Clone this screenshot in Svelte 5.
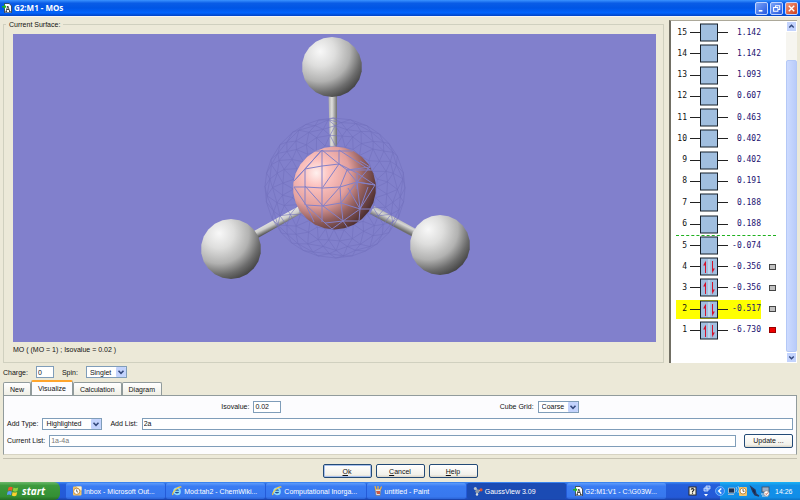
<script lang="ts">
	type Orbital = { id: number; energy: string; occupied?: boolean; mark?: 'grey' | 'red' };

	const orbitals: Orbital[] = [
		{ id: 15, energy: '1.142' },
		{ id: 14, energy: '1.142' },
		{ id: 13, energy: '1.093' },
		{ id: 12, energy: '0.607' },
		{ id: 11, energy: '0.463' },
		{ id: 10, energy: '0.402' },
		{ id: 9, energy: '0.402' },
		{ id: 8, energy: '0.191' },
		{ id: 7, energy: '0.188' },
		{ id: 6, energy: '0.188' },
		{ id: 5, energy: '-0.074' },
		{ id: 4, energy: '-0.356', occupied: true, mark: 'grey' },
		{ id: 3, energy: '-0.356', occupied: true, mark: 'grey' },
		{ id: 2, energy: '-0.517', occupied: true, mark: 'grey' },
		{ id: 1, energy: '-6.730', occupied: true, mark: 'red' }
	];

	const tabs = ['New', 'Visualize', 'Calculation', 'Diagram'];

	const tasks = [
		{ icon: 'mail', label: 'Inbox - Microsoft Out...' },
		{ icon: 'ie', label: 'Mod:tah2 - ChemWiki...' },
		{ icon: 'ie', label: 'Computational Inorga...' },
		{ icon: 'paint', label: 'untitled - Paint' },
		{ icon: 'gauss', label: 'GaussView 3.09' },
		{ icon: 'doc', label: 'G2:M1:V1 - C:\\G03W...' }
	];

	let selected = $state(2);
	let activeTab = $state('Visualize');
	let activeTask = $state('GaussView 3.09');
	let charge = $state('0');
	let spin = $state('Singlet');
	let isovalue = $state('0.02');
	let cubeGrid = $state('Coarse');
	let addType = $state('Highlighted');
	let addList = $state('2a');

	// the spheres are drawn with few facets, so their outline is a polygon
	function facets(cx: number, cy: number, r: number, n: number) {
		const points = [];
		for (let i = 0; i < n; i++) {
			const a = ((i + 0.5) / n) * Math.PI * 2;
			points.push(`${(cx + r * Math.cos(a)).toFixed(1)},${(cy + r * Math.sin(a)).toFixed(1)}`);
		}
		return points.join(' ');
	}

	// rings of a sphere seen from the front, joined into triangles
	function shellMesh(cx: number, cy: number) {
		const radii = [70, 67, 61, 53, 42];
		const n = 28;
		const at = (ring: number, i: number) => {
			const k = i % n;
			const wobble = ring === 0 ? 0 : Math.sin(k * 2.7 + ring * 4) * 1.5;
			const a = ((i + (ring % 2) / 2 + Math.sin(k * 5 + ring) * 0.12) / n) * Math.PI * 2;
			const r = radii[ring] + wobble;
			return `${(cx + r * Math.cos(a)).toFixed(1)} ${(cy + r * Math.sin(a)).toFixed(1)}`;
		};
		let d = '';
		for (let ring = 0; ring < radii.length; ring++) {
			for (let i = 0; i < n; i++) {
				d += `M${at(ring, i)}L${at(ring, i + 1)}`;
				if (ring + 1 < radii.length) {
					d += `M${at(ring, i)}L${at(ring + 1, i)}`;
					d += ring % 2 ? `M${at(ring, i)}L${at(ring + 1, i + 1)}` : `M${at(ring, i + 1)}L${at(ring + 1, i)}`;
				}
			}
		}
		return d;
	}

	const hydrogens = [
		[332, 67],
		[231, 249],
		[440, 245]
	];
	const shell = shellMesh(335, 188);
</script>

{#snippet chevron()}
	<svg class="chevron" viewBox="0 0 10 10" aria-hidden="true">
		<rect width="10" height="10" rx="1" fill="#c3d3fd" />
		<path d="M2.5 3.8 5 6.3 7.5 3.8" fill="none" stroke="#34497d" stroke-width="1.6" />
	</svg>
{/snippet}

{#snippet taskIcon(name: string)}
	<svg class="task-icon" viewBox="0 0 10 10" aria-hidden="true">
		{#if name === 'mail'}
			<rect x="1" y="0.5" width="8.5" height="9" rx="1" fill="#f3c566" />
			<path d="M4 0.5h5.5v4z" fill="#fff5d2" />
			<circle cx="4.7" cy="5.3" r="3.1" fill="#fff" stroke="#b67a2a" stroke-width="0.8" />
			<path d="M4.7 3.5v2l1.3.7" fill="none" stroke="#4a3c28" stroke-width="0.8" />
		{:else if name === 'ie'}
			<circle cx="5" cy="5.4" r="3" fill="#1d4f9c" stroke="#8bd8ff" stroke-width="1.7" />
			<path d="M2.5 5.3h5.3" stroke="#8bd8ff" stroke-width="1.3" />
			<path d="M1 9C-.6 7 6.5-.5 9.4 1.2" fill="none" stroke="#ffd23c" stroke-width="1.1" />
		{:else if name === 'paint'}
			<path d="M2 3h6l-.8 6.5H3z" fill="#d8dfe8" stroke="#6b6a78" stroke-width="0.6" />
			<path d="M3 4 2 0M5 4V0M7 4l1.5-3.5" stroke="#f2b33c" stroke-width="1.2" />
			<path d="M3 5h4v3H4z" fill="#cf5a42" />
		{:else if name === 'gauss'}
			<path d="M2 2l2.5 3L8 4M4.5 5 4 8.5" fill="none" stroke="#dbe2ec" stroke-width="1" />
			<circle cx="2.3" cy="2.5" r="1.5" fill="#b9c4cf" />
			<circle cx="4.4" cy="5.3" r="2.1" fill="#8c97a4" />
			<circle cx="8" cy="3.8" r="1.6" fill="#e4572f" />
			<circle cx="4" cy="8.5" r="1.2" fill="#d7dde3" />
		{:else}
			<path d="M2.5.5h4.7L9.5 3v6.8h-7z" fill="#fff" stroke="#222" stroke-width="0.7" />
			<path d="M4 8.5 5.8 3l2 5.5M3.5 8.5h1.6M7 8.5h1.7M4.7 6.5h2.3" fill="none" stroke="#222" stroke-width="0.8" />
			<path d="M0 3h2V1l2.5 2.7L2 6.2V4.5H0z" fill="#22b322" />
		{/if}
	</svg>
{/snippet}

<div class="screen">
	<header class="titlebar">
		{@render taskIcon('doc')}
		<h1>G2:M1 - MOs</h1>
		<div class="window-buttons">
			<button aria-label="Minimize">
				<svg viewBox="0 0 12 12"><path d="M3 8.5h4" stroke="#fff" stroke-width="1.8" /></svg>
			</button>
			<button aria-label="Restore">
				<svg viewBox="0 0 12 12">
					<path d="M5 4.5V3h4.5v4H8M2.8 5h4.7v4H2.8z" fill="none" stroke="#fff" stroke-width="1.1" />
				</svg>
			</button>
			<button class="close" aria-label="Close">
				<svg viewBox="0 0 12 12"><path d="m3 3 6 6m0-6-6 6" stroke="#fff" stroke-width="1.5" /></svg>
			</button>
		</div>
	</header>

	<main>
		<div class="top">
			<fieldset>
				<legend>Current Surface:</legend>
				<svg class="surface" viewBox="13 34 643 308" role="img" aria-label="Molecular orbital surface">
					<defs>
						<radialGradient id="hydrogen" cx="0.3" cy="0.24" r="0.84">
							<stop offset="0" stop-color="#f8f8f8" />
							<stop offset="0.3" stop-color="#dededd" />
							<stop offset="0.6" stop-color="#b2b2b1" />
							<stop offset="0.82" stop-color="#6c6c6c" />
							<stop offset="1" stop-color="#404040" />
						</radialGradient>
						<radialGradient id="boron" cx="0.28" cy="0.32" r="0.8">
							<stop offset="0" stop-color="#fff0ee" />
							<stop offset="0.2" stop-color="#fcc2bf" />
							<stop offset="0.5" stop-color="#e29f9d" />
							<stop offset="0.72" stop-color="#94605f" />
							<stop offset="1" stop-color="#45292b" />
						</radialGradient>
						<linearGradient id="bond">
							<stop offset="0" stop-color="#aaa" />
							<stop offset="0.4" stop-color="#e0e0de" />
							<stop offset="1" stop-color="#6e6e6e" />
						</linearGradient>
						<linearGradient id="bond-left" gradientUnits="userSpaceOnUse" x1="276" y1="218" x2="280" y2="226">
							<stop offset="0" stop-color="#e6e6e4" />
							<stop offset="0.5" stop-color="#cdcdcb" />
							<stop offset="1" stop-color="#5c5c5c" />
						</linearGradient>
						<linearGradient id="bond-right" gradientUnits="userSpaceOnUse" x1="396" y1="217" x2="392" y2="225">
							<stop offset="0" stop-color="#b4b4b2" />
							<stop offset="0.4" stop-color="#d6d6d4" />
							<stop offset="1" stop-color="#6e6e6e" />
						</linearGradient>
					</defs>
					<path d="M328.5 94h8.5v58h-7z" fill="url(#bond)" />
					<path d="M254 231l45-25 3 7-44 25z" fill="url(#bond-left)" />
					<path d="M374 206l42 23-3 8-43-23z" fill="url(#bond-right)" />
					{#each hydrogens as [x, y]}
						<polygon points={facets(x, y, 30, 22)} fill="url(#hydrogen)" />
					{/each}
					<path d={shell} fill="none" stroke="#7270be" stroke-width="0.6" />
					<polygon points={facets(334.5, 188, 41.5, 26)} fill="url(#boron)" />
					<g fill="none" stroke="#8380c8">
						<path d="M312 151h41M294 181l11-12 17-19 17 14 8 6 23-3-10-6M305 169l17-3 17-2 0-14M322 150v72M305 169v36M294 187h11l18 1 17-1 17-5 18 3M305 186l18 20M323 187l16-23M322 150l-28 31" />
						<path d="M294 187l12 18 17 1 18-3 19 6M306 205l19 18 18-2 17-12 8-22M323 206l17-19M323 206l20 15 5 7M325 223l7 6M306 205l8 17M347 170l-7 17 1 16 16-21 3 27M347 170l10 12 13-15M339 164l18 9 18 12M357 182l18 3M360 209l-1 12-16 0-11 8M360 209h10M341 203l2 18M339 150l31 20M357 174v15M347 170h25M360 209l15-24M348 188l12 21" />
					</g>
				</svg>
				<p>MO ( (MO = 1) ; Isovalue = 0.02 )</p>
			</fieldset>

			<section class="orbitals" aria-label="Orbitals">
				<ol>
					{#each orbitals as orbital}
						<li class:fermi={orbital.id === 5}>
							<button class="level" class:selected={selected === orbital.id} onclick={() => (selected = orbital.id)}>
								<span class="number">{orbital.id}</span>
								<svg viewBox="0 0 38 19" aria-hidden="true">
									<path d="M0 9.5h38" stroke="#222" />
									<rect x="10.5" y="1" width="17" height="17" fill="#a1bfe0" stroke="#17202b" />
									{#if orbital.occupied}
										<path d="M19 2v15" stroke="#dce9f8" />
										<path d="M15.5 16V5M22.5 4v10" fill="none" stroke="#d3122c" />
										<path d="m15.8 3.5-2.6 5h2.6zM22.2 16.5l2.6-5h-2.6z" fill="#d3122c" />
									{/if}
								</svg>
								<span class="energy">{orbital.energy}</span>
							</button>
							{#if orbital.mark}
								<span class="mark {orbital.mark}"></span>
							{/if}
						</li>
					{/each}
				</ol>
				<div class="scrollbar">
					<button aria-label="Scroll up">
						<svg viewBox="0 0 10 10"><path d="M2.5 6.2 5 3.7l2.5 2.5" fill="none" stroke="#34497d" stroke-width="1.6" /></svg>
					</button>
					<span class="thumb"></span>
					<button aria-label="Scroll down">
						<svg viewBox="0 0 10 10"><path d="M2.5 3.8 5 6.3l2.5-2.5" fill="none" stroke="#34497d" stroke-width="1.6" /></svg>
					</button>
				</div>
			</section>
		</div>

		<div class="row state">
			<label for="charge">Charge:</label>
			<input id="charge" class="tiny" bind:value={charge} />
			<label for="spin">Spin:</label>
			<span class="select">
				<select id="spin" bind:value={spin}>
					<option>Singlet</option>
					<option>Triplet</option>
				</select>
				{@render chevron()}
			</span>
		</div>

		<div class="tabs" role="tablist">
			{#each tabs as tab}
				<button role="tab" aria-selected={activeTab === tab} class:active={activeTab === tab} onclick={() => (activeTab = tab)}>
					{tab}
				</button>
			{/each}
		</div>

		<div class="panel" role="tabpanel">
			<div class="row spread">
				<div class="row">
					<label for="isovalue">Isovalue:</label>
					<input id="isovalue" class="small" bind:value={isovalue} />
				</div>
				<div class="row">
					<label for="grid">Cube Grid:</label>
					<span class="select">
						<select id="grid" bind:value={cubeGrid}>
							<option>Coarse</option>
							<option>Medium</option>
							<option>Fine</option>
						</select>
						{@render chevron()}
					</span>
				</div>
			</div>
			<div class="row">
				<label for="add-type">Add Type:</label>
				<span class="select wide">
					<select id="add-type" bind:value={addType}>
						<option>Highlighted</option>
						<option>All</option>
					</select>
					{@render chevron()}
				</span>
				<label class="spaced" for="add-list">Add List:</label>
				<input id="add-list" class="fill" bind:value={addList} />
			</div>
			<div class="row">
				<label for="current-list">Current List:</label>
				<input id="current-list" class="fill" value="1a-4a" disabled />
				<button class="push update">Update ...</button>
			</div>
		</div>

		<div class="actions">
			<button class="push default"><u>O</u>k</button>
			<button class="push"><u>C</u>ancel</button>
			<button class="push"><u>H</u>elp</button>
		</div>
	</main>

	<footer class="taskbar">
		<button class="start">
			<svg viewBox="0 0 12 12" aria-hidden="true">
				<path d="M1.5 2.5Q3.5 1 5.7 2.3L5 5.7Q3 4.6.8 5.8z" fill="#f05a28" />
				<path d="M6.5 2.6q2.3 1.2 4.7 0l-.8 3.5q-2.2 1.2-4.6 0z" fill="#8cd13f" />
				<path d="M.6 6.7q2-1.2 4.2-.1l-.8 3.6Q2 9-.2 10.2z" fill="#5a9cf5" />
				<path d="M5.6 7q2.3 1.2 4.6 0l-.8 3.6q-2.2 1.2-4.5 0z" fill="#fcd02e" />
			</svg>
			start
		</button>
		<nav aria-label="Open windows">
			{#each tasks as task}
				<button class:pressed={activeTask === task.label} onclick={() => (activeTask = task.label)}>
					{@render taskIcon(task.icon)}
					<span>{task.label}</span>
				</button>
			{/each}
		</nav>
		<svg class="language" viewBox="0 0 32 18" aria-hidden="true">
			<rect x="1" y="5" width="7" height="8" fill="#f4f1e2" stroke="#2b2b2b" />
			<path d="M3 7.5q1.5-1.8 3 0 0 1-1.5 2v.7m0 .6v1" fill="none" stroke="#222" stroke-width="1.1" />
			<path d="M18 4h4v3h-4zM16 6h4v3h-4z" fill="#5b92f5" stroke="#d8e6ff" stroke-width="0.8" />
			<path d="m16 12 2 2.4 2-2.4z" fill="#fff" />
		</svg>
		<div class="tray">
			<svg viewBox="0 0 52 18" aria-hidden="true">
				<circle cx="0" cy="9" r="4.5" fill="#2b7ff0" stroke="#8fc4ff" stroke-width="0.7" />
				<path d="m1.3 6.5-2.6 2.5 2.6 2.5" fill="none" stroke="#fff" stroke-width="1.4" />
				<path d="M8.5 6h6v5h-6zM8 12.5h6" fill="#1d3050" stroke="#aebfd0" stroke-width="0.9" />
				<path d="M16 5q2 2 0 5M18 4q2.5 3 0 7" fill="none" stroke="#a9d8ff" stroke-width="0.8" />
				<rect x="19" y="5" width="8" height="9" rx="1" fill="#f1c46b" />
				<circle cx="23" cy="9" r="3" fill="#fff" stroke="#b67a2a" stroke-width="0.8" />
				<path d="M23 7v2.3h1.5" fill="none" stroke="#49402f" stroke-width="0.8" />
				<path d="m31 5 4 3 1 4 3 2-4-1-2-3z" fill="#14254a" stroke="#273960" stroke-width="1.3" />
				<rect x="42" y="5" width="7" height="5" fill="#9eafc5" stroke="#3e4d63" stroke-width="0.8" />
				<path d="M41 12h7M42 14h6" stroke="#d9dee3" stroke-width="1.1" />
				<circle cx="46.5" cy="11.5" r="2.7" fill="#fff" stroke="#777" stroke-width="0.6" />
				<path d="m45.3 11.5 1 1 1.6-2" fill="none" stroke="#b5422a" stroke-width="0.9" />
			</svg>
			<time>14:26</time>
		</div>
	</footer>
</div>

<style>
	:global(body) {
		margin: 0;
	}

	.screen {
		display: flex;
		flex-direction: column;
		min-height: 100vh;
		background: #ece9d8;
		color: #111;
		font: 7px/9px 'Liberation Sans', Arial, sans-serif;
	}

	.screen * {
		box-sizing: border-box;
	}

	button,
	input,
	select {
		margin: 0;
		padding: 0;
		border: 0;
		border-radius: 0;
		background: none;
		color: inherit;
		font: inherit;
	}

	svg {
		display: block;
	}

	.titlebar {
		display: flex;
		align-items: center;
		gap: 2px;
		height: 17px;
		padding: 0 2px;
		background: linear-gradient(#3b93ff, #0a5ce6 20%, #0055e5 50%, #0264fd 80%, #0143c4);
		border-bottom: 1px solid #f5f5f5;
	}

	h1 {
		flex: 1;
		margin: 0;
		color: #fff;
		font: bold 8px/10px 'Noto Sans', sans-serif;
	}

	.window-buttons {
		display: flex;
		gap: 2px;
	}

	.window-buttons button {
		width: 13px;
		height: 13px;
		border: 1px solid #bfd3ff;
		border-radius: 2px;
		background: linear-gradient(135deg, #7ba4f8, #2458e0);
	}

	.window-buttons .close {
		background: linear-gradient(135deg, #f0977c, #d0401a);
	}

	main {
		display: flex;
		flex: 1;
		flex-direction: column;
	}

	.top {
		display: flex;
		flex: 1;
		gap: 5px;
		padding: 3px 3px 0;
	}

	fieldset {
		display: flex;
		flex: 1;
		flex-direction: column;
		min-width: 0;
		margin: 0;
		padding: 5px 7px 8px 9px;
		border: 1px solid #d0d0bf;
	}

	legend {
		margin-left: -7px;
		padding: 0 3px;
	}

	.surface {
		flex: 1 1 300px;
		width: 100%;
		min-height: 0;
		background: #8180cc;
	}

	fieldset p {
		margin: 3px 0 0;
	}

	.orbitals {
		display: flex;
		width: 128px;
		border-top: 1px solid #aca899;
		border-left: 2px solid #716f64;
		background: #fff;
	}

	ol {
		display: grid;
		flex: 1;
		grid-auto-rows: 1fr;
		margin: 0;
		padding: 1px 10px 22px 5px;
		list-style: none;
	}

	li {
		display: flex;
		align-items: center;
		justify-content: space-between;
	}

	.fermi {
		border-top: 1px dashed #1fb01f;
	}

	.level {
		display: flex;
		align-items: center;
		width: 85px;
		height: 19px;
		font: 8px/10px 'DejaVu Sans Mono', monospace;
	}

	.level.selected {
		background: #ff0;
	}

	.level .number {
		width: 11px;
		text-align: right;
	}

	.level svg {
		width: 38px;
		height: 19px;
		margin-left: 3px;
	}

	.energy {
		flex: 1;
		color: #1a0f70;
		text-align: right;
	}

	.mark {
		width: 7px;
		height: 6px;
		border: 1px solid #444;
		background: #c0c0c0;
	}

	.mark.red {
		background: #e00;
		border-color: #900;
	}

	.scrollbar {
		display: flex;
		flex-direction: column;
		width: 11px;
		background: #f6f5f0;
	}

	.scrollbar button {
		height: 11px;
		border: 1px solid #fff;
		background: #c3d3fd;
	}

	.thumb {
		flex: 1;
		margin-top: 28px;
		border: 1px solid #b4c8f6;
		border-radius: 2px;
		background: linear-gradient(90deg, #cddbff, #b9cbf9);
	}

	.row {
		display: flex;
		align-items: center;
		gap: 4px;
	}

	.state {
		gap: 8px;
		margin: 3px 3px 2px;
	}

	.spaced {
		margin-left: 4px;
	}

	input,
	select {
		height: 12px;
		padding: 0 1px;
		border: 1px solid #7f9db9;
		background: #fff;
	}

	input:disabled {
		color: #777;
	}

	.tiny {
		width: 18px;
	}

	.small {
		width: 28px;
	}

	.fill {
		flex: 1;
		min-width: 0;
	}

	.select {
		position: relative;
		width: 41px;
	}

	.select.wide {
		width: 60px;
	}

	select {
		display: block;
		width: 100%;
		padding: 0 3px;
		appearance: none;
	}

	.chevron {
		position: absolute;
		top: 1px;
		right: 1px;
		width: 10px;
		height: 10px;
		pointer-events: none;
	}

	.tabs {
		display: flex;
		align-items: flex-end;
		margin-left: 3px;
	}

	.tabs button {
		height: 13px;
		padding: 0 6px;
		border: 1px solid #919b9c;
		border-bottom: 0;
		border-radius: 2px 2px 0 0;
		background: linear-gradient(#fff, #f0efe6);
	}

	.tabs .active {
		height: 15px;
		border-top: 2px solid #ffa52c;
		background: #fcfcfe;
	}

	.panel {
		display: flex;
		flex-direction: column;
		gap: 4px;
		margin: 0 3px;
		padding: 4px 3px 7px;
		border: 1px solid #919b9c;
		border-bottom-color: #d6d3c3;
		background: #fcfcfe;
	}

	.spread {
		justify-content: space-evenly;
	}

	.panel > .row {
		height: 13px;
	}

	.push {
		width: 49px;
		height: 14px;
		border: 1px solid #234a76;
		border-radius: 2px;
		background: linear-gradient(#fff, #f2f1ea 80%, #d9d4c8);
	}

	.push.default {
		box-shadow: inset 0 0 0 1px #a9c1ec;
	}

	.update {
		margin-left: 4px;
	}

	.actions {
		display: flex;
		justify-content: center;
		gap: 4px;
		margin: 3px 3px 0;
		padding: 5px 0 4px;
		border-top: 1px solid #c5c2b2;
	}

	.taskbar {
		display: flex;
		height: 18px;
		background: linear-gradient(#3f8cf3, #245edb 15%, #2459d6 85%, #1941a5);
		color: #fff;
	}

	.start {
		display: flex;
		align-items: center;
		gap: 3px;
		width: 60px;
		margin-right: 6px;
		padding-left: 7px;
		border-radius: 0 6px 6px 0;
		background: linear-gradient(#6bb96b, #3c9a3c 20%, #348f34 80%, #246c24);
		font: italic bold 10px/12px 'Open Sans', sans-serif;
	}

	.start svg {
		width: 12px;
		height: 12px;
	}

	nav {
		display: flex;
		flex: 1;
		gap: 1px;
		max-width: 600px;
		padding: 1px 0;
	}

	nav button {
		display: flex;
		flex: 1;
		align-items: center;
		gap: 2px;
		min-width: 0;
		padding-left: 6px;
		border-radius: 2px;
		background: linear-gradient(#5e9cfb, #3a7cf3 20%, #3878ee 85%, #2b63d6);
		white-space: nowrap;
	}

	nav .pressed {
		background: #1b4bb4;
	}

	.task-icon {
		flex: none;
		width: 10px;
		height: 10px;
	}

	.language {
		width: 32px;
		height: 18px;
		margin-left: auto;
	}

	.tray {
		display: flex;
		align-items: center;
		gap: 3px;
		width: 80px;
		background: linear-gradient(#1cb2f5, #1290e8 20%, #118ee8 85%, #0d72c4);
	}

	.tray svg {
		width: 52px;
		height: 18px;
		overflow: visible;
	}
</style>
